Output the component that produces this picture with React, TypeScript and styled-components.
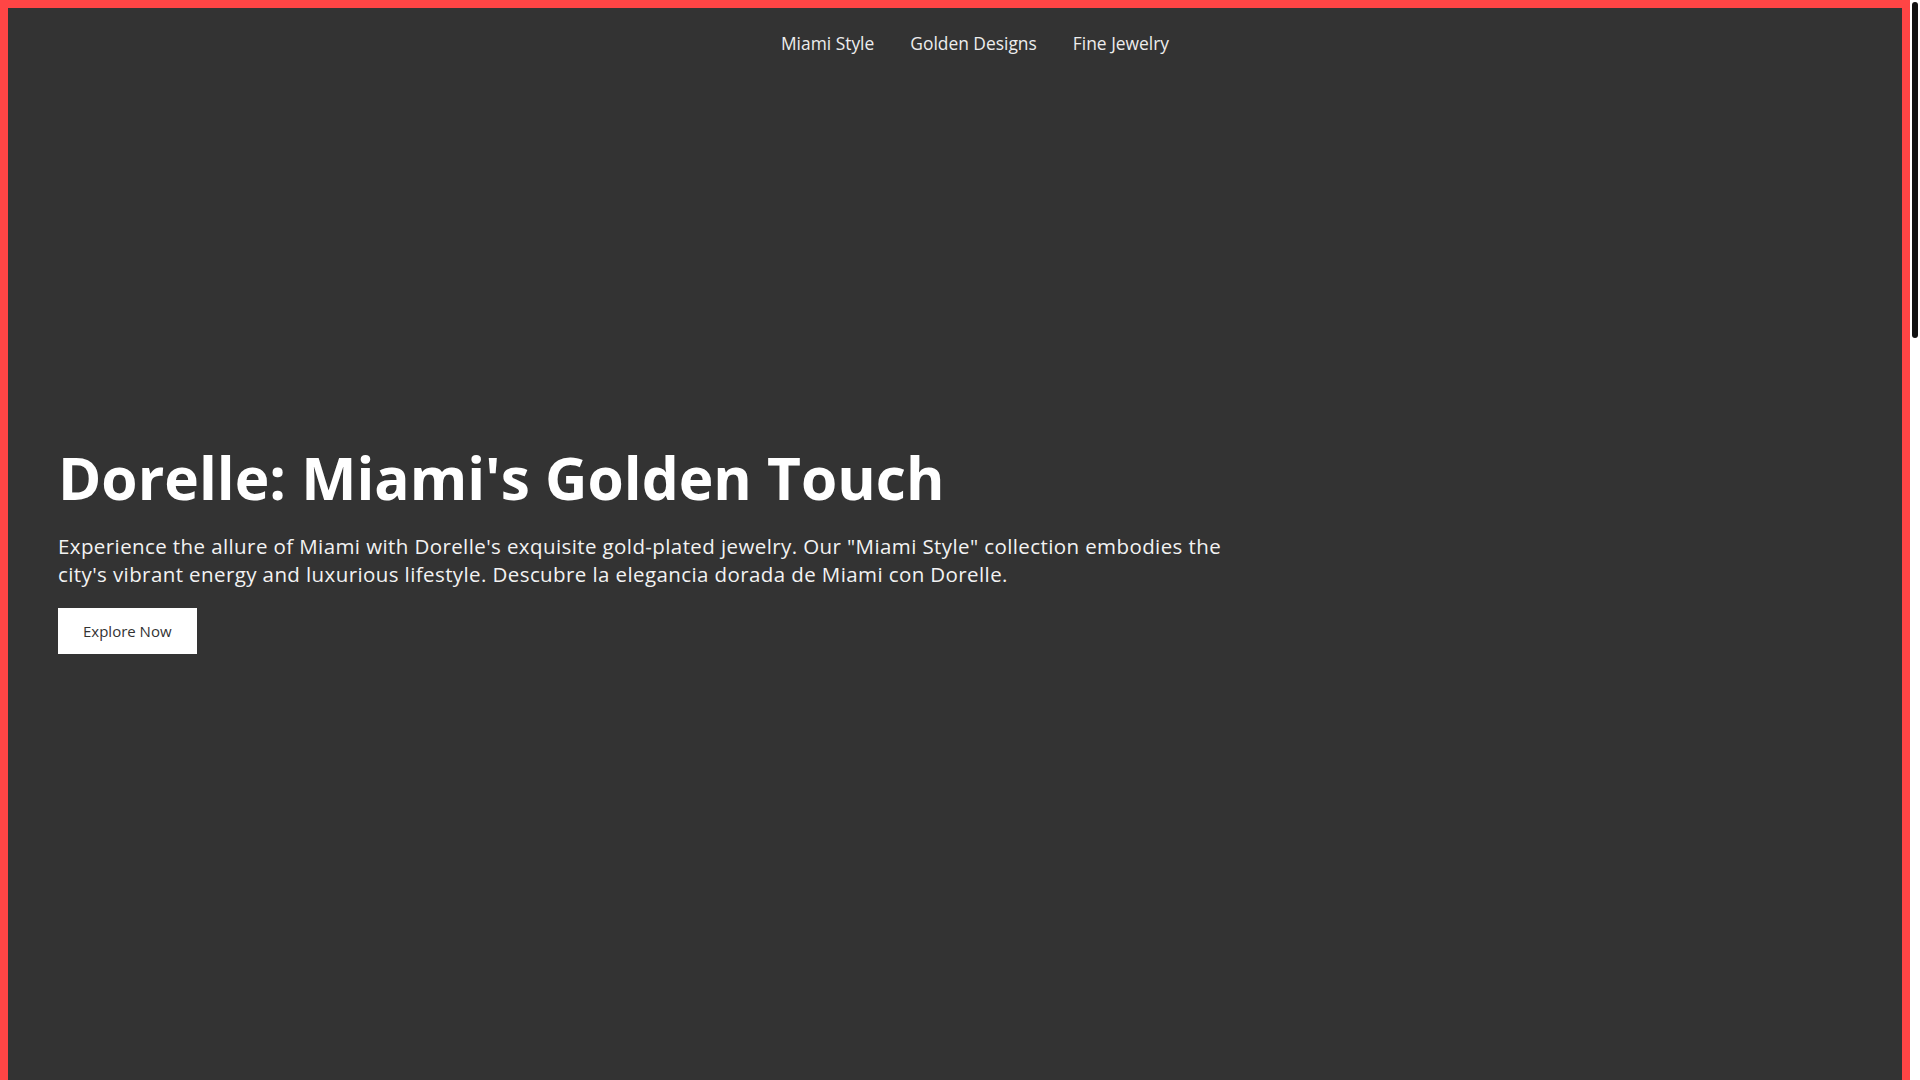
import React from "react";
import styled, { createGlobalStyle } from "styled-components";

const GlobalStyle = createGlobalStyle`
  html,
  body {
    margin: 0;
    height: 100%;
    overflow: hidden;
    background: #ffffff;
  }

  body {
    font-family: "Open Sans", "Liberation Sans", sans-serif;
    color: #ffffff;
  }
`;

const Viewport = styled.div`
  display: flex;
  height: 100vh;
`;

const Shell = styled.div`
  flex: 1;
  min-width: 0;
  overflow: hidden;
  padding: 8px;
  background: #ff4545;
`;

const ScrollTrack = styled.div`
  width: 10px;
  padding: 2px;
  box-sizing: border-box;
  background: #ffffff;
`;

const ScrollThumb = styled.div`
  height: 336px;
  border-radius: 3px;
  background: #111111;
`;

const Page = styled.div`
  position: relative;
  background: #333333;
`;

const Header = styled.header`
  position: absolute;
  top: 0;
  left: 0;
  right: 0;
  display: flex;
  justify-content: center;
  padding: 24px 50px;
  z-index: 2;
`;

const Nav = styled.nav`
  display: flex;
  gap: 36px;
  margin-left: 40px;
`;

const NavLink = styled.a`
  font-size: 17.4px;
  line-height: 23px;
  color: #ededed;
  text-decoration: none;
  cursor: pointer;

  &:hover {
    color: #ffffff;
  }
`;

const Hero = styled.section`
  min-height: 100vh;
  display: flex;
  align-items: center;
  padding: 0 50px;
  box-sizing: border-box;
`;

const HeroContent = styled.div`
  max-width: 1200px;
`;

const Title = styled.h1`
  margin: 0 0 20px;
  font-size: 58.6px;
  line-height: 1.2;
  font-weight: 700;
  color: #ffffff;
`;

const Lead = styled.p`
  margin: 0 0 20px;
  font-size: 20.5px;
  line-height: 28px;
  letter-spacing: 0.4px;
  color: #f2f2f2;
`;

const CTA = styled.a`
  display: inline-block;
  padding: 13px 25px;
  background: #ffffff;
  color: #333333;
  font-size: 15px;
  line-height: 20px;
  text-decoration: none;
  cursor: pointer;
`;

const links = ["Miami Style", "Golden Designs", "Fine Jewelry"];

const App: React.FC = () => {
  return (
    <>
      <GlobalStyle />
      <Viewport>
        <Shell>
          <Page>
            <Header>
              <Nav>
                {links.map((l) => (
                  <NavLink key={l}>{l}</NavLink>
                ))}
              </Nav>
            </Header>

            <Hero>
              <HeroContent>
                <Title>Dorelle: Miami's Golden Touch</Title>
                <Lead>
                  Experience the allure of Miami with Dorelle's exquisite gold-plated jewelry.
                  Our "Miami Style" collection embodies the city's vibrant energy and luxurious
                  lifestyle. Descubre la elegancia dorada de Miami con Dorelle.
                </Lead>
                <CTA>Explore Now</CTA>
              </HeroContent>
            </Hero>
          </Page>
        </Shell>
        <ScrollTrack>
          <ScrollThumb />
        </ScrollTrack>
      </Viewport>
    </>
  );
};

export default App;
